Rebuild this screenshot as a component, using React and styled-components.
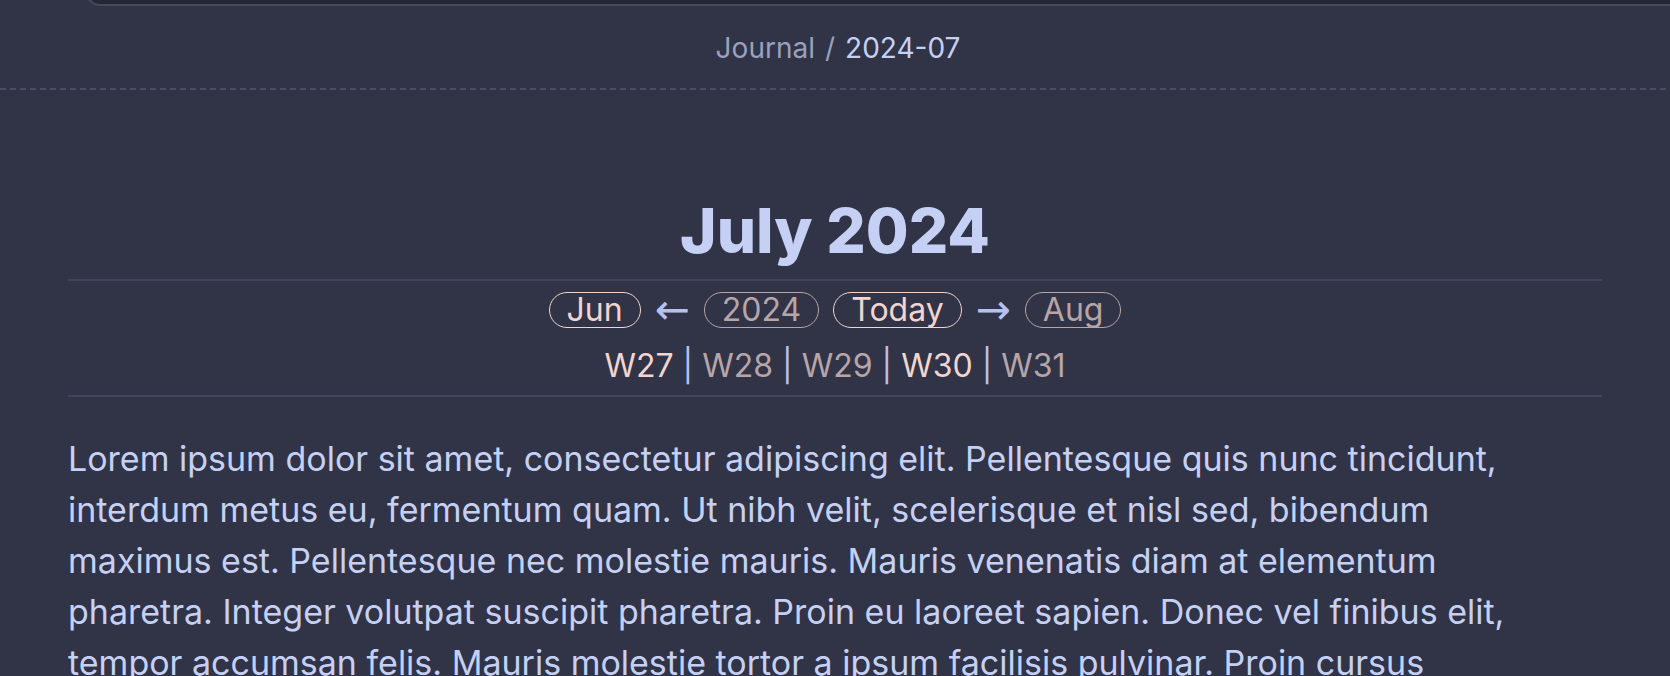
import React from "react";
import styled, { createGlobalStyle } from "styled-components";

const GlobalStyle = createGlobalStyle`
  html, body {
    margin: 0;
    padding: 0;
    background: #303446;
  }
  body {
    font-family: Inter, "Noto Sans", "Liberation Sans", sans-serif;
    color: #c6d0f5;
  }
`;

const Page = styled.div`
  height: 676px;
  overflow: hidden;
  background: #303446;
  display: flex;
  flex-direction: column;
`;

const TopStrip = styled.div`
  flex: none;
  margin-top: -14px;
  margin-left: 86px;
  height: 18px;
  background: #232634;
  border-left: 2px solid #45495c;
  border-bottom: 2px solid #45495c;
  border-bottom-left-radius: 14px;
`;

const Header = styled.header`
  flex: none;
  display: flex;
  justify-content: center;
  padding: 25px 0 23px 6px;
`;

const Breadcrumb = styled.div`
  font-size: 28px;
  line-height: 34px;
  display: flex;
  gap: 10px;
`;

const Crumb = styled.span`
  color: ${(p) => (p.$current ? "#c6d0f5" : "#9aa1bf")};
`;

const DashedRule = styled.div`
  flex: none;
  height: 2px;
  background: repeating-linear-gradient(
    to right,
    #4a4e62 0 6px,
    transparent 6px 10px
  );
`;

const Content = styled.main`
  padding: 0 68px;
`;

const Title = styled.h1`
  margin: 104px 0 12px;
  font-size: 62px;
  line-height: 73px;
  font-weight: 800;
  letter-spacing: 0;
  text-align: center;
  color: #c6d0f5;
`;

const Rule = styled.hr`
  margin: 0;
  border: none;
  height: 2px;
  background: #414559;
`;

const NavRow = styled.nav`
  margin-top: 11px;
  display: flex;
  justify-content: center;
  align-items: center;
  gap: 14px;
  font-size: 32px;
`;

const Pill = styled.span`
  display: inline-block;
  padding: 0 17px;
  line-height: 34px;
  border-radius: 999px;
  border: 1.5px solid currentColor;
  color: ${(p) => (p.$muted ? "#b8a5a7" : "#f2d5cf")};
`;

const Arrow = styled.span`
  font-family: "DejaVu Sans", sans-serif;
  font-size: 42px;
  line-height: 34px;
  color: #b7c1ef;
`;

const WeekRow = styled.div`
  margin: 12px 0 4px;
  text-align: center;
  font-size: 32px;
  line-height: 51px;
`;

const Week = styled.span`
  color: ${(p) => (p.$muted ? "#b8a5a7" : "#f2d5cf")};
`;

const Sep = styled.span`
  color: #b7c1ef;
`;

const Paragraph = styled.p`
  margin: 36px 0 0;
  padding-right: 36px;
  font-size: 34px;
  line-height: 51px;
  color: #c6d0f5;
`;

const weeks = [
  { label: "W27", muted: false },
  { label: "W28", muted: true },
  { label: "W29", muted: true },
  { label: "W30", muted: false },
  { label: "W31", muted: true },
];

export default function App() {
  return (
    <>
      <GlobalStyle />
      <Page>
        <TopStrip />
        <Header>
          <Breadcrumb>
            <Crumb>Journal</Crumb>
            <Crumb>/</Crumb>
            <Crumb $current>2024-07</Crumb>
          </Breadcrumb>
        </Header>
        <DashedRule />
        <Content>
          <Title>July 2024</Title>
          <Rule />
          <NavRow>
            <Pill>Jun</Pill>
            <Arrow>←</Arrow>
            <Pill $muted>2024</Pill>
            <Pill>Today</Pill>
            <Arrow>→</Arrow>
            <Pill $muted>Aug</Pill>
          </NavRow>
          <WeekRow>
            {weeks.map((w, i) => (
              <React.Fragment key={w.label}>
                {i > 0 && <Sep> | </Sep>}
                <Week $muted={w.muted}>{w.label}</Week>
              </React.Fragment>
            ))}
          </WeekRow>
          <Rule />
          <Paragraph>
            Lorem ipsum dolor sit amet, consectetur adipiscing elit. Pellentesque
            quis nunc tincidunt, interdum metus eu, fermentum quam. Ut nibh velit,
            scelerisque et nisl sed, bibendum maximus est. Pellentesque nec
            molestie mauris. Mauris venenatis diam at elementum pharetra. Integer
            volutpat suscipit pharetra. Proin eu laoreet sapien. Donec vel finibus
            elit, tempor accumsan felis. Mauris molestie tortor a ipsum facilisis
            pulvinar. Proin cursus vehicula lectus, sed tincidunt nunc aliquet.
          </Paragraph>
        </Content>
      </Page>
    </>
  );
}
